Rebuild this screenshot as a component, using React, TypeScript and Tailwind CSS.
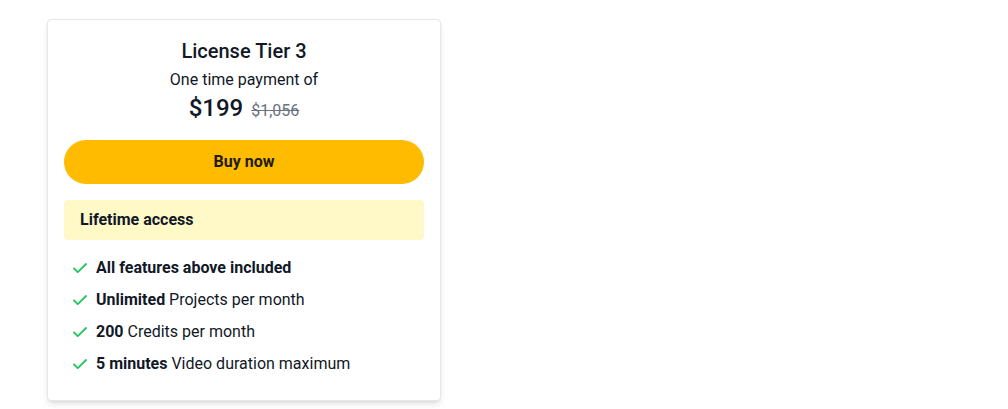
import React from 'react';

const features: { bold: string; rest: string }[] = [
  { bold: 'All features above included', rest: '' },
  { bold: 'Unlimited', rest: ' Projects per month' },
  { bold: '200', rest: ' Credits per month' },
  { bold: '5 minutes', rest: ' Video duration maximum' },
];

function Check() {
  return (
    <svg width="16" height="16" viewBox="0 0 16 16" fill="none" className="shrink-0">
      <path d="M2 8.5l3.8 3.7L14 4" stroke="#22c55e" strokeWidth="1.8" strokeLinecap="round" strokeLinejoin="round" />
    </svg>
  );
}

export default function App() {
  return (
    <div className="min-h-screen bg-white font-['Roboto',sans-serif] text-[#111827]">
      <div className="ml-[47px] pt-[19px]">
        <div className="w-[394px] rounded border border-gray-200 bg-white px-4 pt-[17px] pb-6 shadow-md">
          <div className="text-center">
            <h3 className="text-[20px] leading-7 font-medium">License Tier 3</h3>
            <p className="mt-[3px] text-[16px] leading-6">One time payment of</p>
            <div className="flex h-8 items-baseline justify-center gap-2 overflow-hidden leading-8">
              <span className="text-[24px] font-medium">$199</span>
              <span className="text-[16px] text-gray-500 line-through">$1,056</span>
            </div>
          </div>
          <button className="mt-4 h-11 w-full rounded-full bg-[#ffbb00] text-[16px] font-bold text-[#1f1a0e]">
            Buy now
          </button>
          <div className="mt-4 flex h-10 items-center rounded bg-[#fef9c7] px-4 text-[16px] font-bold">
            Lifetime access
          </div>
          <ul className="mt-4 flex flex-col gap-2">
            {features.map((f) => (
              <li key={f.bold} className="flex items-center gap-2 pl-2 text-[16px] leading-6">
                <Check />
                <span>
                  <b className="font-bold">{f.bold}</b>
                  {f.rest}
                </span>
              </li>
            ))}
          </ul>
        </div>
      </div>
    </div>
  );
}
